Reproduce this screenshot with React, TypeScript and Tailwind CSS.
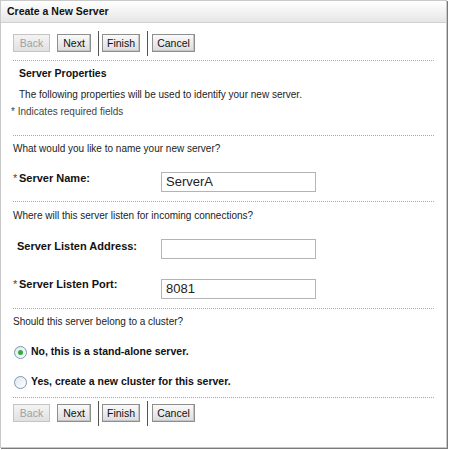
import type { ReactNode } from 'react';

const ui = { fontFamily: '"Liberation Sans", Arial, sans-serif' };

function Btn({ children, disabled, w }: { children: ReactNode; disabled?: boolean; w: string }) {
  return (
    <button
      type="button"
      disabled={disabled}
      className={
        (disabled
          ? 'text-[#a0a0a0] border-[#c4c4c4] bg-gradient-to-b from-[#f4f4f4] to-[#e0e0e0]'
          : 'text-[#111] border-[#8e8e8e] bg-gradient-to-b from-[#fafafa] to-[#dcdcdc] shadow-[inset_-1px_-1px_0_#c4c4c4]') +
        ' h-[18px] border text-[10.5px] leading-none flex items-center justify-center ' +
        w
      }
      style={ui}
    >
      {children}
    </button>
  );
}

const Sep = () => <div className="w-px h-[25px] bg-[#555]" />;

function WizardButtons() {
  return (
    <div className="flex items-center h-[18px] pl-[12px]">
      <Btn disabled w="w-[37px]">
        Back
      </Btn>
      <div className="w-[7px]" />
      <Btn w="w-[34px]">Next</Btn>
      <div className="w-[7px]" />
      <Sep />
      <div className="w-[3px]" />
      <Btn w="w-[38px]">Finish</Btn>
      <div className="w-[7px]" />
      <Sep />
      <div className="w-[4px]" />
      <Btn w="w-[43px]">Cancel</Btn>
    </div>
  );
}

const Dots = () => <div className="mx-[12px] border-t border-dotted border-[#a8a8a8]" />;

// labelShift nudges the label up against the input box
function Field({
  label,
  value,
  required,
  labelShift = '',
}: {
  label: string;
  value?: string;
  required?: boolean;
  labelShift?: string;
}) {
  return (
    <div className="flex items-start h-[20px]">
      <div className={'w-[160px] flex items-start pl-[12px] leading-[14px] ' + labelShift}>
        {required ? <span className="w-[6px] text-[11px] text-[#444]">*</span> : <span className="w-[4px]" />}
        <span className="font-bold text-[11px] text-[#111]">{label}</span>
      </div>
      <div className="w-[155px] h-[20px] border border-[#b4b4b4] bg-white px-[4px] text-[13px] leading-[18px] text-[#222]">
        {value}
      </div>
    </div>
  );
}

function Radio({ checked, label }: { checked?: boolean; label: string }) {
  return (
    <div className="flex items-center h-[14px] pl-[13px]">
      <span className="w-[13px] h-[13px] rounded-full border border-[#7d97b3] bg-gradient-to-br from-[#e1e7ed] to-white flex items-center justify-center">
        {checked && <span className="w-[5px] h-[5px] rounded-full bg-[#2fae3a]" />}
      </span>
      <span className="ml-[4px] text-[10.5px] font-bold text-[#111]">{label}</span>
    </div>
  );
}

export default function App() {
  return (
    <div className="w-[449px] h-[450px] bg-white" style={ui}>
      <div className="w-[447px] h-[448px] border border-[#c9c9c9] shadow-[1px_1px_0_#7a7a7a] flex flex-col text-[10px] text-[#222]">
        <div className="h-[22px] shrink-0 flex items-center pl-[6px] border-b border-[#d0d0d0] bg-gradient-to-b from-white to-[#e6e6e6]">
          <span className="font-bold text-[10.5px] text-[#111]">Create a New Server</span>
        </div>

        <div className="mt-[11px]">
          <WizardButtons />
        </div>
        <div className="mt-[8px]">
          <Dots />
        </div>

        <div className="mt-[5px] pl-[18px] leading-[14px] text-[10.5px] font-bold text-[#111]">Server Properties</div>
        <div className="mt-[8px] pl-[18px] leading-[14px]">
          The following properties will be used to identify your new server.
        </div>
        <div className="mt-[3px] pl-[10px] leading-[14px] text-[#444]">* Indicates required fields</div>

        <div className="mt-[16px]">
          <Dots />
        </div>
        <div className="mt-[6px] pl-[12px] leading-[14px]">What would you like to name your new server?</div>
        <div className="mt-[16px]">
          <Field required label="Server Name:" value="ServerA" labelShift="-mt-[1px]" />
        </div>

        <div className="mt-[9px]">
          <Dots />
        </div>
        <div className="mt-[7px] pl-[12px] leading-[14px]">Where will this server listen for incoming connections?</div>
        <div className="mt-[16px]">
          <Field label="Server Listen Address:" />
        </div>
        <div className="mt-[20px]">
          <Field required label="Server Listen Port:" value="8081" labelShift="-mt-[2px]" />
        </div>

        <div className="mt-[9px]">
          <Dots />
        </div>
        <div className="mt-[6px] pl-[12px] leading-[14px]">Should this server belong to a cluster?</div>
        <div className="mt-[16px]">
          <Radio checked label="No, this is a stand-alone server." />
        </div>
        <div className="mt-[16px]">
          <Radio label="Yes, create a new cluster for this server." />
        </div>
        <div className="mt-[8px]">
          <Dots />
        </div>
        <div className="mt-[6px]">
          <WizardButtons />
        </div>
      </div>
    </div>
  );
}
